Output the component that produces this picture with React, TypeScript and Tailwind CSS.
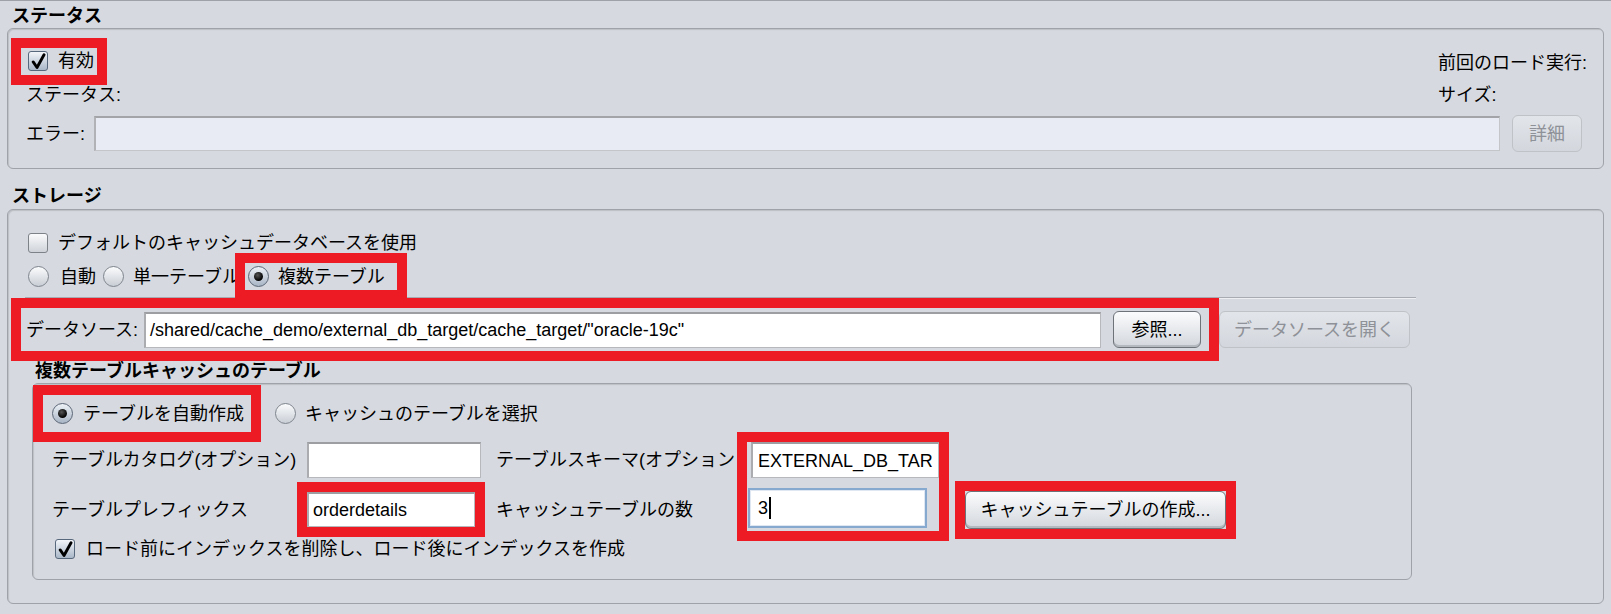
import type { ReactNode } from 'react';

const RED = 'outline-[10px] outline-solid outline-[#ed1c24]';

function CheckBox({ checked }: { checked: boolean }) {
  return (
    <span
      className={`flex h-[20px] w-[20px] shrink-0 items-center justify-center rounded-[3px] border ${
        checked
          ? 'border-[#58687c] bg-linear-to-b from-[#f3f6fa] to-[#aab7c8]'
          : 'border-[#7d8289] bg-linear-to-b from-[#fafbfc] to-[#cfd3d9]'
      }`}
    >
      {checked && (
        <svg width="17" height="17" viewBox="0 0 16 16">
          <path d="M3 8.4 L6.6 13.6 L13.2 1.6" fill="none" stroke="#000" strokeWidth="2.7" strokeLinecap="round" strokeLinejoin="round" />
        </svg>
      )}
    </span>
  );
}

function Radio({ checked }: { checked: boolean }) {
  return (
    <span
      className={`flex h-[21px] w-[21px] shrink-0 items-center justify-center rounded-full border ${
        checked
          ? 'border-[#5b6676] bg-linear-to-b from-[#eef2f7] to-[#a9b5c5]'
          : 'border-[#7f858e] bg-linear-to-b from-[#fbfcfd] to-[#c9ced5]'
      }`}
    >
      {checked && <span className="h-[9px] w-[9px] rounded-full bg-[radial-gradient(circle_at_40%_35%,#555,#000_70%)]" />}
    </span>
  );
}

function Field({ className = '', children }: { className?: string; children?: ReactNode }) {
  return (
    <div
      className={`flex items-center overflow-hidden whitespace-nowrap border border-[#b6b8bc] border-t-2 border-t-[#9c9ea2] border-l-2 border-l-[#aaacb0] bg-white ${className}`}
    >
      {children}
    </div>
  );
}

function Button({ className = '', disabled, children }: { className?: string; disabled?: boolean; children: ReactNode }) {
  return (
    <div
      className={`flex items-center justify-center whitespace-nowrap rounded-[6px] border ${
        disabled
          ? 'border-[#bfc2c7] bg-linear-to-b from-[#e2e5ea] to-[#d3d6dc] text-[#8e9197]'
          : 'border-[#6e737a] bg-linear-to-b from-[#fbfcfd] to-[#d3d7dd] shadow-[inset_0_-2px_0_#b4b8bf]'
      } ${className}`}
    >
      {children}
    </div>
  );
}

function GroupBox({ className = '', children }: { className?: string; children: ReactNode }) {
  return (
    <div className={`rounded-[6px] border border-[#9fa2a8] shadow-[inset_1px_1px_1px_rgba(0,0,0,0.12)] ${className}`}>
      {children}
    </div>
  );
}

export default function App() {
  return (
    <div className="h-[614px] w-[1611px] overflow-hidden border-t border-[#9ea1a8] bg-[#d6d9df] font-['Liberation_Sans','Noto_Sans_CJK_JP',sans-serif] text-[18px] leading-[24px] text-black">
      {/* ステータス */}
      <div className="h-[27px] pl-[12px] pt-[4px] font-bold leading-[22px]">ステータス</div>
      <GroupBox className="mx-[7px] h-[141px] pl-[13px] pt-[19px]">
        <div className="flex h-[27px] items-center">
          <div className="flex-1">
            <span className={`inline-flex h-[27px] items-center pl-[7px] pr-[3px] ${RED}`}>
              <CheckBox checked />
              <span className="ml-[10px]">有効</span>
            </span>
          </div>
          <div className="w-[165px] pt-[3px]">前回のロード実行:</div>
        </div>
        <div className="mt-[8px] flex h-[24px] items-center">
          <div className="flex-1 pl-[5px]">ステータス:</div>
          <div className="w-[165px]">サイズ:</div>
        </div>
        <div className="mt-[8px] flex items-center">
          <div className="w-[73px] pl-[5px]">エラー:</div>
          <div className="h-[35px] w-[1406px] border border-[#c3c5c9] border-t-2 border-t-[#a2a4a8] border-l-2 border-l-[#b0b2b6] bg-[#e8ebf3]" />
          <Button disabled className="ml-[12px] h-[37px] w-[70px]">
            詳細
          </Button>
        </div>
      </GroupBox>

      {/* ストレージ */}
      <div className="h-[40px] pl-[12px] pt-[16px] font-bold leading-[22px]">ストレージ</div>
      <GroupBox className="mx-[7px] h-[395px] pl-[13px] pt-[21px]">
        <div className="flex h-[24px] items-center pl-[7px]">
          <CheckBox checked={false} />
          <span className="ml-[10px]">デフォルトのキャッシュデータベースを使用</span>
        </div>

        <div className="mt-[8px] flex h-[27px] items-center">
          <span className="ml-[7px]">
            <Radio checked={false} />
          </span>
          <span className="ml-[11px]">自動</span>
          <span className="ml-[7px]">
            <Radio checked={false} />
          </span>
          <span className="ml-[9px]">単一テーブル</span>
          <span className={`ml-[5px] inline-flex h-[27px] items-center pl-[3px] pr-[12px] ${RED}`}>
            <Radio checked />
            <span className="ml-[9px]">複数テーブル</span>
          </span>
        </div>

        <div className="ml-[4px] mt-[7px] h-[2px] w-[1391px] border-t border-b border-t-[#a8abb1] border-b-[#eceef2]" />

        <div className="mt-[9px] flex items-center">
          <div className={`flex h-[43px] w-[1188px] items-center pl-[5px] ${RED}`}>
            <div className="w-[118px]">データソース:</div>
            <Field className="h-[36px] w-[957px] pl-[4px]">/shared/cache_demo/external_db_target/cache_target/"oracle-19c"</Field>
            <Button className="ml-[12px] h-[37px] w-[88px]">参照...</Button>
          </div>
          <Button disabled className="ml-[10px] h-[37px] w-[191px]">
            データソースを開く
          </Button>
        </div>

        <div className="mt-[9px] h-[23px] pl-[14px] font-bold leading-[22px]">複数テーブルキャッシュのテーブル</div>
        <GroupBox className="ml-[11px] h-[197px] w-[1380px] pt-[11px]">
          <div className="flex h-[37px] items-center">
            <span className={`ml-[10px] inline-flex h-[37px] items-center pl-[9px] pr-[7px] ${RED}`}>
              <Radio checked />
              <span className="ml-[10px]">テーブルを自動作成</span>
            </span>
            <span className="ml-[24px]">
              <Radio checked={false} />
            </span>
            <span className="ml-[9px]">キャッシュのテーブルを選択</span>
          </div>

          <div className="ml-[19px] mt-[10px] grid grid-cols-[255px_189px_251px_192px_auto] grid-rows-[36px_43px] gap-y-[10px]">
            <div className="col-start-1 row-start-1 self-center">テーブルカタログ(オプション)</div>
            <Field className="col-start-2 row-start-1 h-[36px] w-[174px]" />
            <div className="col-start-3 row-start-1 self-center overflow-hidden whitespace-nowrap">テーブルスキーマ(オプション</div>
            <div className={`col-start-4 row-span-2 row-start-1 flex flex-col ${RED}`}>
              <Field className="ml-[4px] h-[36px] w-[188px] pl-[5px]">EXTERNAL_DB_TAR</Field>
              <div className="ml-[1px] mt-[10px] flex h-[40px] w-[179px] items-center border-2 border-[#86a9cf] bg-white pl-[8px] shadow-[inset_0_0_0_1px_#dfe8f2]">
                3<span className="ml-[1px] h-[22px] w-[2px] bg-black" />
              </div>
            </div>

            <div className="col-start-1 row-start-2 self-center">テーブルプレフィックス</div>
            <Field className={`col-start-2 row-start-2 h-[35px] w-[168px] self-center pl-[4px] ${RED}`}>orderdetails</Field>
            <div className="col-start-3 row-start-2 self-center">キャッシュテーブルの数</div>
            <div className="col-start-5 row-start-2 self-center pl-[26px]">
              <div className={`w-[261px] ${RED}`}>
                <Button className="h-[38px] w-[261px]">キャッシュテーブルの作成...</Button>
              </div>
            </div>
          </div>

          <div className="ml-[22px] mt-[6px] flex h-[24px] items-center">
            <CheckBox checked />
            <span className="ml-[11px]">ロード前にインデックスを削除し、ロード後にインデックスを作成</span>
          </div>
        </GroupBox>
      </GroupBox>
    </div>
  );
}
